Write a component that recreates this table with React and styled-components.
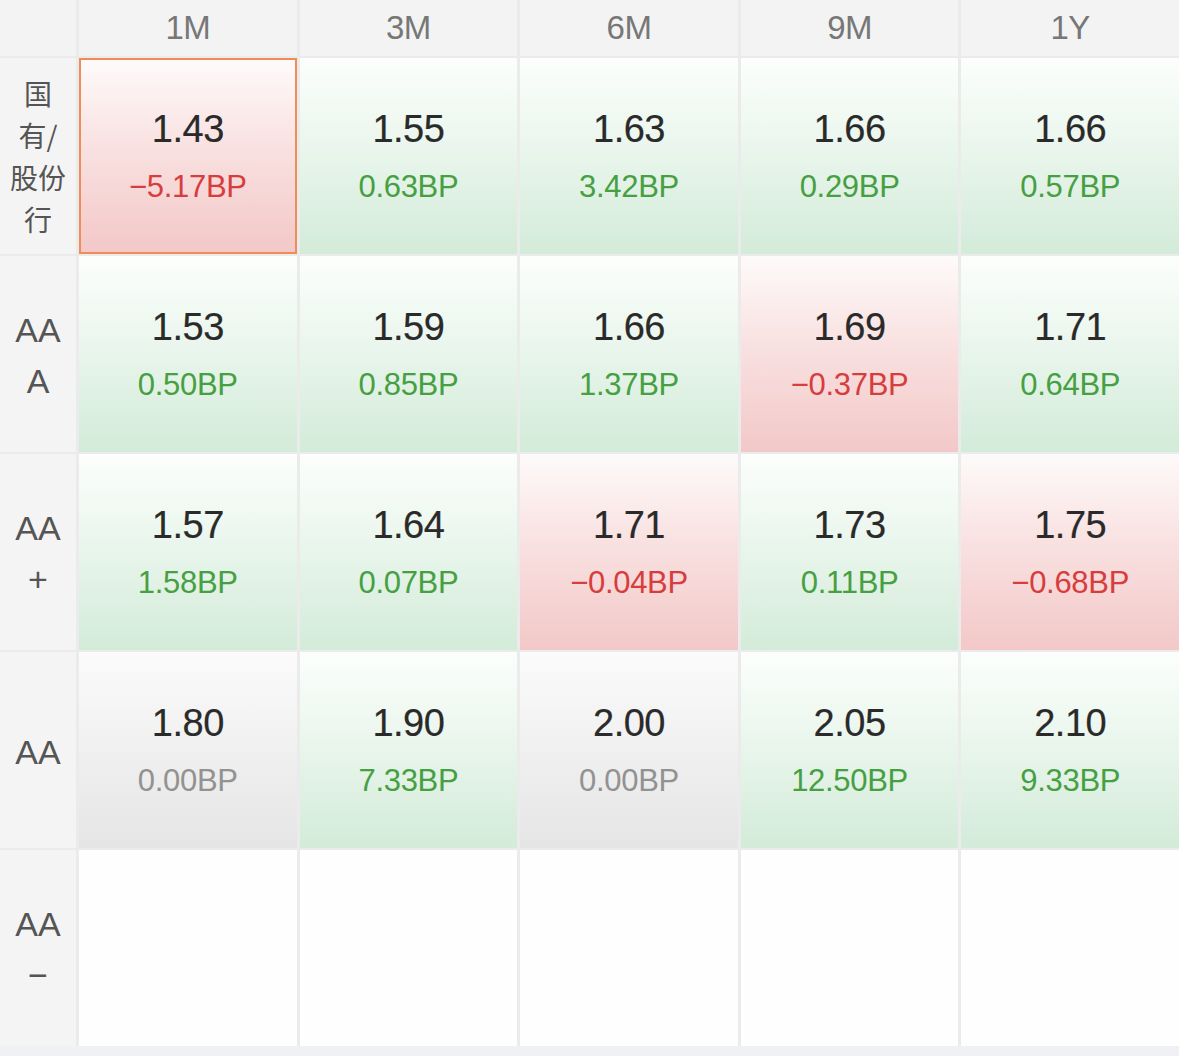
import React from 'react';
import styled, { createGlobalStyle } from 'styled-components';

const GlobalStyle = createGlobalStyle`
  html, body {
    margin: 0;
    padding: 0;
    background: #eff1f4;
  }
  body {
    font-family: "Liberation Sans", Arial, "Noto Sans CJK SC", sans-serif;
  }
`;

const Board = styled.div`
  display: grid;
  grid-template-columns: 76px repeat(5, 1fr);
  grid-template-rows: 56px repeat(5, 196px);
  column-gap: 3px;
  row-gap: 2px;
  width: 1179px;
  background: #ebebeb;
`;

const Corner = styled.div`
  background: #f3f3f3;
`;

const Head = styled.div`
  display: flex;
  align-items: center;
  justify-content: center;
  background: #f3f3f3;
  color: #777;
  font-size: 33px;
  letter-spacing: -0.5px;
`;

const Label = styled.div`
  display: flex;
  flex-direction: column;
  align-items: center;
  justify-content: center;
  background: #f4f4f4;
  color: #555;
  font-family: ${(p) => (p.$cjk ? '"Noto Sans CJK SC", sans-serif' : '"Liberation Sans", Arial, sans-serif')};
  font-size: ${(p) => (p.$cjk ? '28px' : '34px')};
  line-height: ${(p) => (p.$cjk ? '42px' : '51px')};
  padding-top: ${(p) => (p.$cjk ? '0' : '4px')};
`;

const backgrounds = {
  up: 'linear-gradient(180deg, #fcfefc 0%, #eaf6ed 45%, #d3ebd9 100%)',
  down: 'linear-gradient(180deg, #fefafa 0%, #f9e1e1 45%, #f3c8c8 100%)',
  flat: 'linear-gradient(180deg, #fbfbfb 0%, #f1f1f1 45%, #e5e5e5 100%)',
  empty: '#fefefe',
};

const Cell = styled.div`
  display: flex;
  flex-direction: column;
  align-items: center;
  justify-content: center;
  gap: 18px;
  box-sizing: border-box;
  background: ${(p) => backgrounds[p.$tone]};
  border: ${(p) => (p.$active ? '2px solid #ee8d58' : 'none')};
`;

const Rate = styled.div`
  font-size: 38px;
  line-height: 44px;
  color: #2a2a2a;
  letter-spacing: -0.5px;
  -webkit-text-stroke: 0.2px #2a2a2a;
`;

const changeColors = {
  up: '#46a042',
  down: '#d63d3d',
  flat: '#929292',
};

const Change = styled.div`
  font-size: 31px;
  line-height: 36px;
  color: ${(p) => changeColors[p.$tone]};
  letter-spacing: -0.3px;
`;

const tenors = ['1M', '3M', '6M', '9M', '1Y'];

const rows = [
  {
    label: ['国', '有/', '股份', '行'],
    cjk: true,
    cells: [
      ['1.43', '−5.17BP', 'down', true],
      ['1.55', '0.63BP', 'up'],
      ['1.63', '3.42BP', 'up'],
      ['1.66', '0.29BP', 'up'],
      ['1.66', '0.57BP', 'up'],
    ],
  },
  {
    label: ['AA', 'A'],
    cells: [
      ['1.53', '0.50BP', 'up'],
      ['1.59', '0.85BP', 'up'],
      ['1.66', '1.37BP', 'up'],
      ['1.69', '−0.37BP', 'down'],
      ['1.71', '0.64BP', 'up'],
    ],
  },
  {
    label: ['AA', '+'],
    cells: [
      ['1.57', '1.58BP', 'up'],
      ['1.64', '0.07BP', 'up'],
      ['1.71', '−0.04BP', 'down'],
      ['1.73', '0.11BP', 'up'],
      ['1.75', '−0.68BP', 'down'],
    ],
  },
  {
    label: ['AA'],
    cells: [
      ['1.80', '0.00BP', 'flat'],
      ['1.90', '7.33BP', 'up'],
      ['2.00', '0.00BP', 'flat'],
      ['2.05', '12.50BP', 'up'],
      ['2.10', '9.33BP', 'up'],
    ],
  },
  {
    label: ['AA', '−'],
    cells: [],
  },
];

const App = () => {
  return (
    <>
      <GlobalStyle />
      <Board>
        <Corner />
        {tenors.map((t) => (
          <Head key={t}>{t}</Head>
        ))}
        {rows.map((row, i) => (
          <React.Fragment key={i}>
            <Label $cjk={row.cjk}>
              {row.label.map((line, j) => (
                <span key={j}>{line}</span>
              ))}
            </Label>
            {tenors.map((t, k) => {
              const c = row.cells[k];
              if (!c) return <Cell key={t} $tone="empty" />;
              return (
                <Cell key={t} $tone={c[2]} $active={c[3]}>
                  <Rate>{c[0]}</Rate>
                  <Change $tone={c[2]}>{c[1]}</Change>
                </Cell>
              );
            })}
          </React.Fragment>
        ))}
      </Board>
    </>
  );
};

export default App;
